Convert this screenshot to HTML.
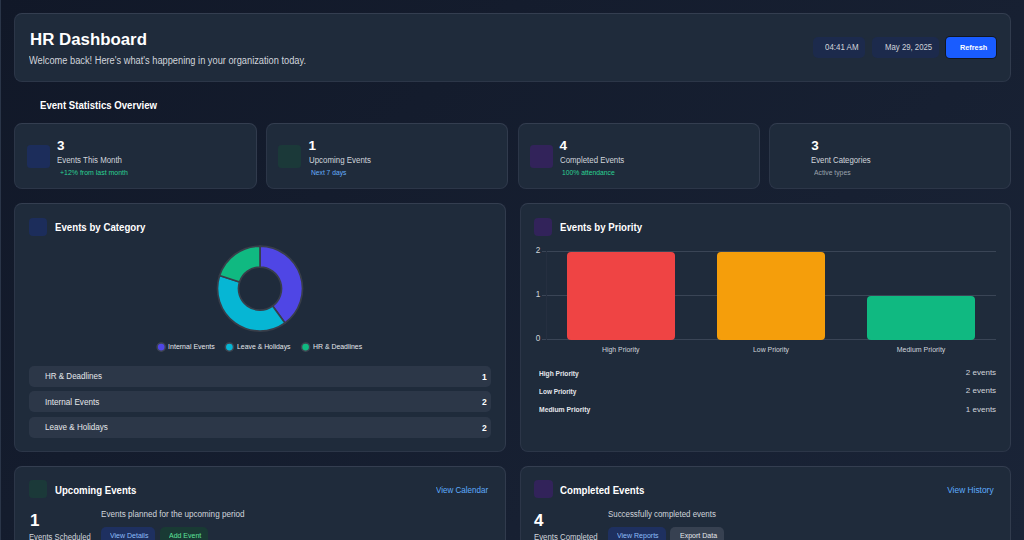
<!DOCTYPE html>
<html><head><meta charset="utf-8">
<style>
*{box-sizing:border-box;margin:0;padding:0}
html,body{width:1024px;height:540px;overflow:hidden}
body{background:linear-gradient(135deg,#111828 0%,#1a2437 100%);font-family:"Liberation Sans",sans-serif;color:#fff;position:relative}
.b{position:absolute}
.t{position:absolute;white-space:nowrap;transform-origin:0 0}
</style></head><body>
<div class="b" style="left:0;top:0;width:1px;height:540px;background:#2a3548"></div>
<div class="b" style="left:14px;top:13px;width:997px;height:69px;background:#1f2b3b;border:1px solid #2c3648;border-top-color:#343e50;border-right-color:#313b4d;border-radius:8px;"></div>
<div class="t" style="left:29.70px;top:30.99px;font-size:17.4px;line-height:17.4px;color:#ffffff;font-weight:bold;transform:scaleX(0.9681);">HR Dashboard</div>
<div class="t" style="left:29.30px;top:55.75px;font-size:10px;line-height:10px;color:#d1d5db;transform:scaleX(0.9259);">Welcome back! Here's what's happening in your organization today.</div>
<div class="b" style="left:813px;top:37px;width:52px;height:21px;background:#1c2a4c;border-radius:5px;"></div>
<div class="t" style="left:824.80px;top:43.31px;font-size:8.5px;line-height:8.5px;color:#d1d5db;transform:scaleX(0.9328);">04:41 AM</div>
<div class="b" style="left:872px;top:37px;width:67px;height:21px;background:#1c2a4c;border-radius:5px;"></div>
<div class="t" style="left:884.70px;top:43.31px;font-size:8.5px;line-height:8.5px;color:#d1d5db;transform:scaleX(0.9164);">May 29, 2025</div>
<div class="b" style="left:946px;top:37px;width:50px;height:21px;background:#195cff;border-radius:4px;box-shadow:0 0 0 1px rgba(0,0,0,0.45);"></div>
<div class="t" style="left:959.80px;top:44.24px;font-size:8px;line-height:8px;color:#ffffff;font-weight:bold;transform:scaleX(0.9131);">Refresh</div>
<div class="t" style="left:40.30px;top:99.90px;font-size:11px;line-height:11px;color:#ffffff;font-weight:bold;transform:scaleX(0.8738);">Event Statistics Overview</div>
<div class="b" style="left:14px;top:123px;width:243px;height:66px;background:#1f2b3b;border:1px solid #2c3648;border-top-color:#343e50;border-right-color:#313b4d;border-radius:8px;"></div>
<div class="b" style="left:27px;top:145px;width:23px;height:23px;background:#1c2d5b;border-radius:3.5px;"></div>
<div class="t" style="left:56.90px;top:139.19px;font-size:13.5px;line-height:13.5px;color:#ffffff;font-weight:bold;">3</div>
<div class="t" style="left:56.90px;top:155.91px;font-size:8.5px;line-height:8.5px;color:#d1d5db;transform:scaleX(0.9254);">Events This Month</div>
<div class="t" style="left:59.80px;top:169.31px;font-size:7.2px;line-height:7.2px;color:#2bd293;transform:scaleX(0.9682);">+12% from last month</div>
<div class="b" style="left:266px;top:123px;width:242px;height:66px;background:#1f2b3b;border:1px solid #2c3648;border-top-color:#343e50;border-right-color:#313b4d;border-radius:8px;"></div>
<div class="b" style="left:278px;top:145px;width:23px;height:23px;background:#1b3939;border-radius:3.5px;"></div>
<div class="t" style="left:308.50px;top:139.19px;font-size:13.5px;line-height:13.5px;color:#ffffff;font-weight:bold;">1</div>
<div class="t" style="left:308.50px;top:155.91px;font-size:8.5px;line-height:8.5px;color:#d1d5db;transform:scaleX(0.9307);">Upcoming Events</div>
<div class="t" style="left:310.60px;top:169.31px;font-size:7.2px;line-height:7.2px;color:#66aefc;transform:scaleX(0.9311);">Next 7 days</div>
<div class="b" style="left:518px;top:123px;width:242px;height:66px;background:#1f2b3b;border:1px solid #2c3648;border-top-color:#343e50;border-right-color:#313b4d;border-radius:8px;"></div>
<div class="b" style="left:530px;top:145px;width:23px;height:23px;background:#32235a;border-radius:3.5px;"></div>
<div class="t" style="left:559.60px;top:139.19px;font-size:13.5px;line-height:13.5px;color:#ffffff;font-weight:bold;">4</div>
<div class="t" style="left:559.60px;top:155.91px;font-size:8.5px;line-height:8.5px;color:#d1d5db;transform:scaleX(0.9258);">Completed Events</div>
<div class="t" style="left:562.20px;top:169.31px;font-size:7.2px;line-height:7.2px;color:#2bd293;transform:scaleX(0.9421);">100% attendance</div>
<div class="b" style="left:769px;top:123px;width:242px;height:66px;background:#1f2b3b;border:1px solid #2c3648;border-top-color:#343e50;border-right-color:#313b4d;border-radius:8px;"></div>
<div class="t" style="left:811.20px;top:139.19px;font-size:13.5px;line-height:13.5px;color:#ffffff;font-weight:bold;">3</div>
<div class="t" style="left:811.20px;top:155.91px;font-size:8.5px;line-height:8.5px;color:#d1d5db;transform:scaleX(0.9141);">Event Categories</div>
<div class="t" style="left:813.60px;top:169.31px;font-size:7.2px;line-height:7.2px;color:#9ca3af;transform:scaleX(0.9429);">Active types</div>
<div class="b" style="left:14px;top:203px;width:492px;height:249px;background:#1f2b3b;border:1px solid #2c3648;border-top-color:#343e50;border-right-color:#313b4d;border-radius:8px;"></div>
<div class="b" style="left:520px;top:203px;width:491px;height:249px;background:#1f2b3b;border:1px solid #2c3648;border-top-color:#343e50;border-right-color:#313b4d;border-radius:8px;"></div>
<div class="b" style="left:29px;top:218px;width:18px;height:18px;background:#1c2d5b;border-radius:4px;"></div>
<div class="t" style="left:54.70px;top:222.20px;font-size:11px;line-height:11px;color:#ffffff;font-weight:bold;transform:scaleX(0.8802);">Events by Category</div>
<div class="b" style="left:534px;top:218px;width:18px;height:18px;background:#32235a;border-radius:4px;"></div>
<div class="t" style="left:559.50px;top:222.20px;font-size:11px;line-height:11px;color:#ffffff;font-weight:bold;transform:scaleX(0.8767);">Events by Priority</div>
<svg class="b" style="left:0;top:0" width="1024" height="540" viewBox="0 0 1024 540"><path d="M260.00,246.10 A42.5,42.5 0 0 1 284.98,322.98 L272.64,305.99 A21.5,21.5 0 0 0 260.00,267.10 Z" fill="#4f46e5" stroke="#383e4a" stroke-width="1.7" stroke-linejoin="round"/><path d="M284.98,322.98 A42.5,42.5 0 0 1 219.58,275.47 L239.55,281.96 A21.5,21.5 0 0 0 272.64,305.99 Z" fill="#06b6d4" stroke="#383e4a" stroke-width="1.7" stroke-linejoin="round"/><path d="M219.58,275.47 A42.5,42.5 0 0 1 260.00,246.10 L260.00,267.10 A21.5,21.5 0 0 0 239.55,281.96 Z" fill="#10b981" stroke="#383e4a" stroke-width="1.7" stroke-linejoin="round"/><circle cx="161.2" cy="347.1" r="4.1" fill="#4f46e5" stroke="#3e4451" stroke-width="1.5"/><circle cx="229.4" cy="347.1" r="4.1" fill="#06b6d4" stroke="#3e4451" stroke-width="1.5"/><circle cx="305.6" cy="347.1" r="4.1" fill="#10b981" stroke="#3e4451" stroke-width="1.5"/></svg>
<div class="t" style="left:168.10px;top:342.78px;font-size:7px;line-height:7px;color:#e5e7eb;">Internal Events</div>
<div class="t" style="left:236.80px;top:342.78px;font-size:7px;line-height:7px;color:#e5e7eb;transform:scaleX(0.9821);">Leave & Holidays</div>
<div class="t" style="left:312.80px;top:342.78px;font-size:7px;line-height:7px;color:#e5e7eb;transform:scaleX(0.9859);">HR & Deadlines</div>
<div class="b" style="left:29px;top:366px;width:462px;height:21px;background:#2c3748;border-radius:5px;"></div>
<div class="t" style="left:45.30px;top:372.21px;font-size:8.5px;line-height:8.5px;color:#e5e7eb;transform:scaleX(0.9426);">HR &amp; Deadlines</div>
<div class="t" style="left:481.97px;top:372.61px;font-size:8.5px;line-height:8.5px;color:#ffffff;font-weight:bold;">1</div>
<div class="b" style="left:29px;top:391px;width:462px;height:21px;background:#2c3748;border-radius:5px;"></div>
<div class="t" style="left:45.30px;top:397.61px;font-size:8.5px;line-height:8.5px;color:#e5e7eb;transform:scaleX(0.9568);">Internal Events</div>
<div class="t" style="left:481.97px;top:397.61px;font-size:8.5px;line-height:8.5px;color:#ffffff;font-weight:bold;">2</div>
<div class="b" style="left:29px;top:417px;width:462px;height:21px;background:#2c3748;border-radius:5px;"></div>
<div class="t" style="left:45.30px;top:423.01px;font-size:8.5px;line-height:8.5px;color:#e5e7eb;transform:scaleX(0.9509);">Leave &amp; Holidays</div>
<div class="t" style="left:481.97px;top:423.61px;font-size:8.5px;line-height:8.5px;color:#ffffff;font-weight:bold;">2</div>
<div class="b" style="left:542px;top:251px;width:454px;height:1px;background:#3a4556;border-radius:0px;"></div>
<div class="t" style="left:535.84px;top:247.07px;font-size:8.2px;line-height:8.2px;color:#d1d5db;">2</div>
<div class="b" style="left:542px;top:295px;width:454px;height:1px;background:#3a4556;border-radius:0px;"></div>
<div class="t" style="left:535.84px;top:291.07px;font-size:8.2px;line-height:8.2px;color:#d1d5db;">1</div>
<div class="b" style="left:542px;top:339px;width:454px;height:1px;background:#3a4556;border-radius:0px;"></div>
<div class="t" style="left:535.84px;top:335.07px;font-size:8.2px;line-height:8.2px;color:#d1d5db;">0</div>
<div class="b" style="left:546px;top:251px;width:1px;height:89px;background:#252f40;border-radius:0px;"></div>
<div class="b" style="left:567px;top:252px;width:108px;height:88px;background:#ef4444;border-radius:4px;"></div>
<div class="b" style="left:717px;top:252px;width:108px;height:88px;background:#f59e0b;border-radius:4px;"></div>
<div class="b" style="left:867px;top:296px;width:108px;height:44px;background:#10b981;border-radius:4px;"></div>
<div class="t" style="left:602.25px;top:346.08px;font-size:7px;line-height:7px;color:#d1d5db;transform:scaleX(0.9837);">High Priority</div>
<div class="t" style="left:753.00px;top:346.08px;font-size:7px;line-height:7px;color:#d1d5db;transform:scaleX(0.9845);">Low Priority</div>
<div class="t" style="left:896.75px;top:346.08px;font-size:7px;line-height:7px;color:#d1d5db;">Medium Priority</div>
<div class="t" style="left:538.70px;top:369.98px;font-size:7px;line-height:7px;color:#e5e7eb;font-weight:bold;transform:scaleX(0.9452);">High Priority</div>
<div class="t" style="left:965.86px;top:369.14px;font-size:8px;line-height:8px;color:#d1d5db;">2 events</div>
<div class="t" style="left:538.70px;top:387.88px;font-size:7px;line-height:7px;color:#e5e7eb;font-weight:bold;transform:scaleX(0.9222);">Low Priority</div>
<div class="t" style="left:965.86px;top:387.04px;font-size:8px;line-height:8px;color:#d1d5db;">2 events</div>
<div class="t" style="left:538.70px;top:406.38px;font-size:7px;line-height:7px;color:#e5e7eb;font-weight:bold;transform:scaleX(0.9679);">Medium Priority</div>
<div class="t" style="left:965.86px;top:405.54px;font-size:8px;line-height:8px;color:#d1d5db;">1 events</div>
<div class="b" style="left:14px;top:466px;width:492px;height:120px;background:#1f2b3b;border:1px solid #2c3648;border-top-color:#343e50;border-right-color:#313b4d;border-radius:8px;"></div>
<div class="b" style="left:520px;top:466px;width:491px;height:120px;background:#1f2b3b;border:1px solid #2c3648;border-top-color:#343e50;border-right-color:#313b4d;border-radius:8px;"></div>
<div class="b" style="left:29px;top:480px;width:18px;height:18px;background:#1b3939;border-radius:3.5px;"></div>
<div class="t" style="left:54.90px;top:484.84px;font-size:10.6px;line-height:10.6px;color:#ffffff;font-weight:bold;transform:scaleX(0.9092);">Upcoming Events</div>
<div class="t" style="left:436.40px;top:485.90px;font-size:8.4px;line-height:8.4px;color:#5eacff;transform:scaleX(0.9600);">View Calendar</div>
<div class="t" style="left:30.00px;top:511.73px;font-size:17px;line-height:17px;color:#ffffff;font-weight:bold;">1</div>
<div class="t" style="left:29.20px;top:533.31px;font-size:8.5px;line-height:8.5px;color:#d1d5db;transform:scaleX(0.9005);">Events Scheduled</div>
<div class="t" style="left:100.60px;top:510.10px;font-size:8.4px;line-height:8.4px;color:#d1d5db;transform:scaleX(0.9690);">Events planned for the upcoming period</div>
<div class="b" style="left:101px;top:527px;width:54px;height:20px;background:#1e3060;border-radius:5px;"></div>
<div class="t" style="left:109.80px;top:532.16px;font-size:7.5px;line-height:7.5px;color:#8dbdf9;transform:scaleX(0.9336);">View Details</div>
<div class="b" style="left:160px;top:527px;width:48px;height:20px;background:#193a34;border-radius:5px;"></div>
<div class="t" style="left:169.30px;top:532.16px;font-size:7.5px;line-height:7.5px;color:#5ee39b;transform:scaleX(0.9304);">Add Event</div>
<div class="b" style="left:534px;top:480px;width:19px;height:18px;background:#32235a;border-radius:4px;"></div>
<div class="t" style="left:559.90px;top:484.84px;font-size:10.6px;line-height:10.6px;color:#ffffff;font-weight:bold;transform:scaleX(0.9126);">Completed Events</div>
<div class="t" style="left:947.20px;top:485.90px;font-size:8.4px;line-height:8.4px;color:#5eacff;">View History</div>
<div class="t" style="left:534.10px;top:511.73px;font-size:17px;line-height:17px;color:#ffffff;font-weight:bold;">4</div>
<div class="t" style="left:534.20px;top:533.31px;font-size:8.5px;line-height:8.5px;color:#d1d5db;transform:scaleX(0.9171);">Events Completed</div>
<div class="t" style="left:607.90px;top:510.10px;font-size:8.4px;line-height:8.4px;color:#d1d5db;transform:scaleX(0.9420);">Successfully completed events</div>
<div class="b" style="left:608px;top:527px;width:58px;height:20px;background:#1e3060;border-radius:5px;"></div>
<div class="t" style="left:617.10px;top:532.16px;font-size:7.5px;line-height:7.5px;color:#8dbdf9;transform:scaleX(0.9355);">View Reports</div>
<div class="b" style="left:670px;top:527px;width:54px;height:20px;background:#374151;border-radius:5px;"></div>
<div class="t" style="left:679.60px;top:532.16px;font-size:7.5px;line-height:7.5px;color:#e5e7eb;transform:scaleX(0.9368);">Export Data</div>
</body></html>
